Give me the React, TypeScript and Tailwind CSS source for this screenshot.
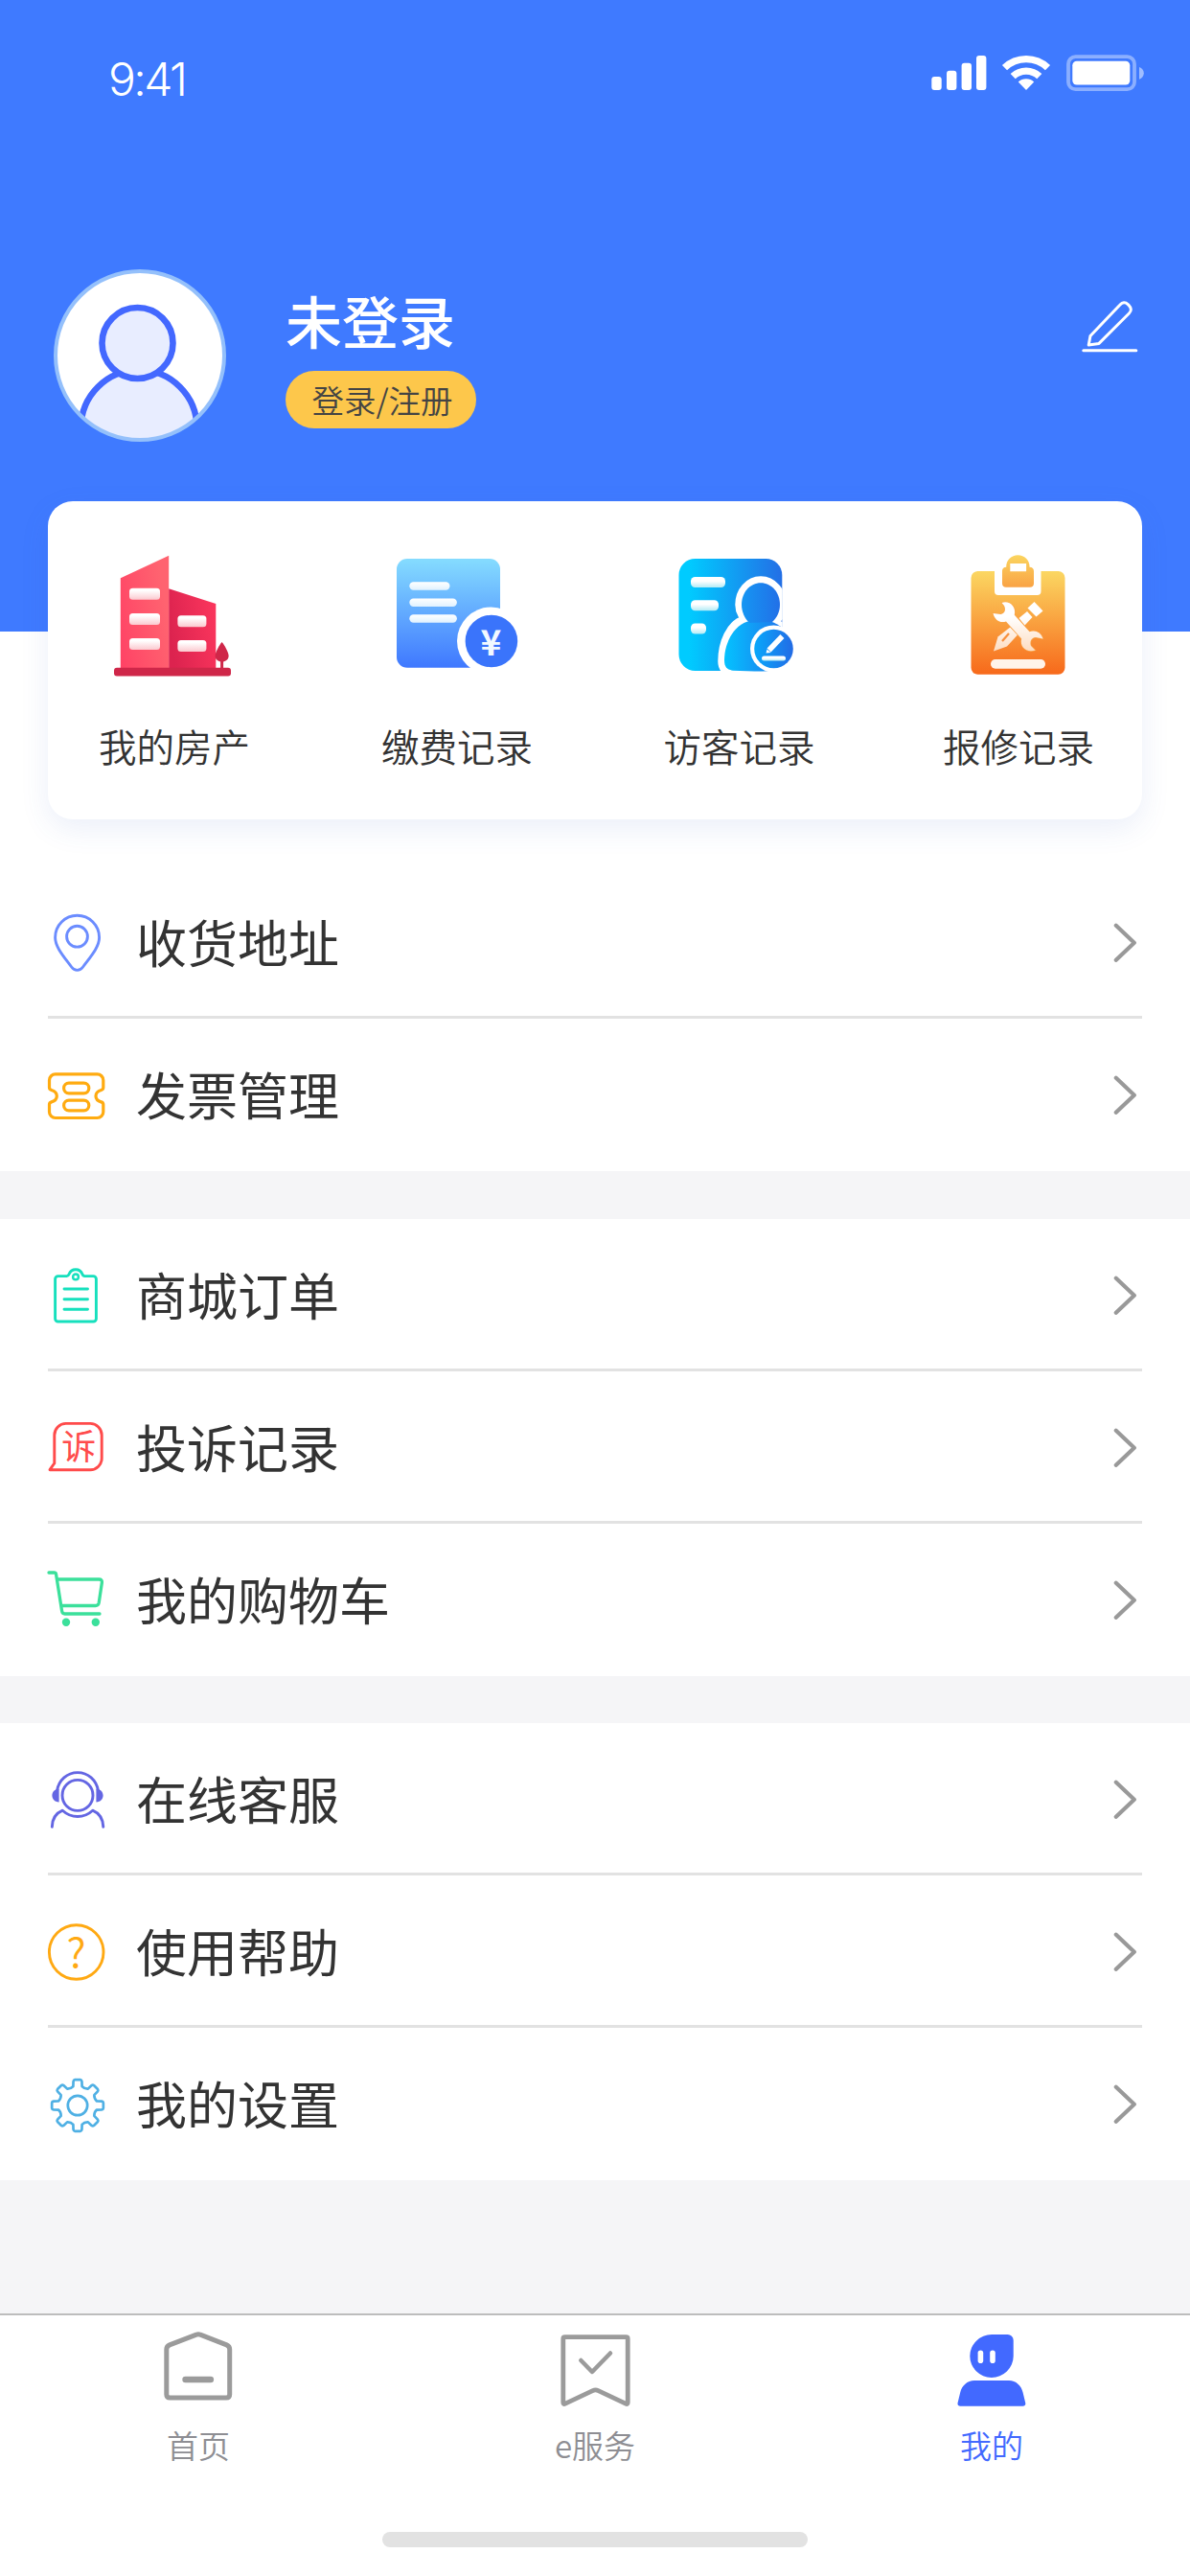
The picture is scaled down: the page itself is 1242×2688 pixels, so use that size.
import type { ReactNode } from "react";

/* ---------- status bar ---------- */

function StatusIcons() {
  return (
    <svg className="h-[44px] w-[228px]" viewBox="968 54 228 44" fill="#fff">
      <rect x="972.3" y="80" width="10.4" height="14" rx="3" />
      <rect x="988" y="73.7" width="10.4" height="20.3" rx="3" />
      <rect x="1003.6" y="65.7" width="10.4" height="28.3" rx="3" />
      <rect x="1019" y="58" width="10.4" height="36" rx="3" />
      <path d="M1071 94l-8.2-8.600a12 12 0 0 1 16.400 0z" />
      <path d="M1057.200 79.600a20 20 0 0 1 27.600 0" fill="none" stroke="#fff" strokeWidth="7.400" />
      <path d="M1048.500 70.600a32.600 32.600 0 0 1 45 0" fill="none" stroke="#fff" strokeWidth="7.400" />
      <rect x="1115" y="59.200" width="69" height="34" rx="7.500" fill="none" stroke="#fff" strokeOpacity=".4" strokeWidth="3.800" />
      <rect x="1119.300" y="63.700" width="60" height="24.800" rx="4.500" />
      <path d="M1189 70c3 .9 4.800 3.400 4.800 6.300s-1.800 5.500-4.800 6.400z" fillOpacity=".5" />
    </svg>
  );
}

/* ---------- profile ---------- */

function Avatar() {
  return (
    <svg className="size-[180px]" viewBox="55.5 281 180 180">
      <clipPath id="avatar-clip">
        <circle cx="145.500" cy="371" r="87.500" />
      </clipPath>
      <circle cx="145.500" cy="371" r="88" fill="#fff" />
      <g clipPath="url(#avatar-clip)" fill="#e8edff" stroke="#4368ff" strokeWidth="6.600">
        <circle cx="144.500" cy="446.500" r="60.500" />
        <circle cx="143" cy="358" r="37" />
      </g>
      <circle cx="145.500" cy="371" r="88" fill="none" stroke="#94c0fb" strokeWidth="4" />
    </svg>
  );
}

function EditIcon() {
  return (
    <svg className="h-[60px] w-[64px]" viewBox="1126 310 64 60" fill="none" stroke="#fff" strokeWidth="3" strokeLinecap="round" strokeLinejoin="round">
      <path d="M1138 350.500l31-32.500c2.500-2.800 5.500-3 8.200-.4l1 1c2.800 2.800 2.900 5.800.2 8.400l-31.400 31.400-10.800 1.600z" />
      <path d="M1130.800 365.700h55" />
    </svg>
  );
}

/* ---------- shortcut icons ---------- */

function HouseIcon() {
  return (
    <svg className="h-[140px] w-[158px]" viewBox="103 570 158 140">
      <defs>
        <linearGradient id="tower-a" x1="0" y1="1" x2="1" y2="0.600">
          <stop offset="0" stopColor="#ff4265" />
          <stop offset="1" stopColor="#ff6370" />
        </linearGradient>
        <linearGradient id="tower-b" x1="0" y1="0.500" x2="1" y2="0.200">
          <stop offset="0" stopColor="#dc234f" />
          <stop offset="1" stopColor="#fb365d" />
        </linearGradient>
        <linearGradient id="pane" x1="0" y1="0" x2="0" y2="1">
          <stop offset="0.200" stopColor="#fff" />
          <stop offset="1" stopColor="#fbc9cf" />
        </linearGradient>
      </defs>
      <path d="M125.800 603.300L176.200 579.700V698H125.800z" fill="url(#tower-a)" />
      <path d="M176.200 614.300L225.300 630V698H176.200z" fill="url(#tower-b)" />
      <g fill="url(#pane)">
        <rect x="135" y="613.700" width="32" height="12" rx="3.500" />
        <rect x="135" y="640" width="32" height="12" rx="3.500" />
        <rect x="135" y="666" width="32" height="12" rx="3.500" />
        <rect x="185.400" y="642.200" width="30" height="12" rx="3.500" />
        <rect x="185.400" y="668" width="30" height="12" rx="3.500" />
      </g>
      <g fill="#cf2749">
        <path d="M231.600 670c2.600 3 7 10.500 7 14.500 0 3.500-3 6-7 6s-7-2.500-7-6c0-4 4.400-11.500 7-14.500z" />
        <rect x="230.100" y="688" width="3" height="10" />
        <rect x="119" y="696.700" width="122" height="8.700" rx="3" />
      </g>
    </svg>
  );
}

function BillIcon() {
  return (
    <svg className="h-[140px] w-[158px]" viewBox="398 570 158 140">
      <defs>
        <linearGradient id="bill" x1="0" y1="0" x2="0" y2="1">
          <stop offset="0" stopColor="#85dcff" />
          <stop offset="1" stopColor="#3f78ff" />
        </linearGradient>
        <linearGradient id="bill-line" x1="0" y1="0" x2="0" y2="1">
          <stop offset="0" stopColor="#fff" />
          <stop offset="1" stopColor="#e0f2ff" />
        </linearGradient>
      </defs>
      <rect x="414" y="583" width="108" height="113.700" rx="11" fill="url(#bill)" />
      <g fill="url(#bill-line)">
        <rect x="427.300" y="607.300" width="42.200" height="8.400" rx="4.200" />
        <rect x="427.300" y="624.500" width="49.600" height="8.400" rx="4.200" />
        <rect x="427.300" y="641.300" width="49.600" height="8.400" rx="4.200" />
      </g>
      <circle cx="512.500" cy="669" r="35.500" fill="#fff" />
      <circle cx="512.900" cy="669" r="27.300" fill="#3a74fb" />
      <text x="512.400" y="684.200" textAnchor="middle" fill="#f2f9ff" className="font-['Noto_Sans_CJK_SC'] text-[37px] font-bold">¥</text>
    </svg>
  );
}

function VisitorIcon() {
  return (
    <svg className="h-[140px] w-[158px]" viewBox="693 570 158 140">
      <defs>
        <linearGradient id="visit" gradientUnits="userSpaceOnUse" x1="708" y1="0" x2="818" y2="0">
          <stop offset="0.100" stopColor="#00cbff" />
          <stop offset="1" stopColor="#246de5" />
        </linearGradient>
        <linearGradient id="visit-head" gradientUnits="userSpaceOnUse" x1="774" y1="0" x2="815" y2="0">
          <stop offset="0" stopColor="#1596f3" />
          <stop offset="1" stopColor="#226fe7" />
        </linearGradient>
        <linearGradient id="visit-body" gradientUnits="userSpaceOnUse" x1="756" y1="0" x2="816" y2="0">
          <stop offset="0" stopColor="#04c3ff" />
          <stop offset="1" stopColor="#1f76ec" />
        </linearGradient>
        <linearGradient id="visit-badge" gradientUnits="userSpaceOnUse" x1="787" y1="0" x2="828" y2="0">
          <stop offset="0" stopColor="#08a8fb" />
          <stop offset="1" stopColor="#236be5" />
        </linearGradient>
        <linearGradient id="visit-line" x1="0" y1="0" x2="0" y2="1">
          <stop offset="0.400" stopColor="#fff" />
          <stop offset="1" stopColor="#b4ebf5" />
        </linearGradient>
        <clipPath id="visit-clip">
          <rect x="700" y="575" width="116.600" height="125.500" />
        </clipPath>
      </defs>
      <rect x="708.500" y="583" width="107.800" height="117" rx="17" fill="url(#visit)" />
      <g fill="url(#visit-line)">
        <rect x="721" y="602" width="36" height="11" rx="4.500" />
        <rect x="721" y="626.200" width="29" height="11" rx="4.500" />
        <rect x="721" y="650.500" width="16" height="11" rx="4.500" />
      </g>
      <g clipPath="url(#visit-clip)">
        <path
          d="M785 649c-7-5-11-11-11-18 0-13 9-23 20-23s20 10 20 23c0 7-3 14-10 19 7 3 11 6 13 9v41h-46c-11 0-15-3-15-10 0-18 8-38 22-41z"
          fill="#fff"
          stroke="#fff"
          strokeWidth="13.500"
          strokeLinejoin="round"
        />
      </g>
      <path d="M783 648h20c6 2 10 4 14 8l-3 44c-17 .8-34 .3-49-.3-6-.7-9-3.700-9-10.700 0-18 10-38 27-41z" fill="url(#visit-body)" />
      <path d="M782 650c-5-5-8-12-8-19 0-13 9-22.700 20-22.700s20 9.700 20 22.700c0 7-3 13.500-8 18z" fill="url(#visit-head)" />
      <circle cx="807.500" cy="677" r="24.500" fill="#fff" />
      <circle cx="807.500" cy="677" r="20.300" fill="url(#visit-badge)" />
      <path d="M804.500 676.500l10-10.500" stroke="#fff" strokeWidth="5.600" strokeLinecap="square" />
      <path d="M799.500 681.500l1-4 4 3.500z" fill="#fff" />
      <rect x="795" y="684.500" width="25" height="5" rx="2.500" fill="url(#visit-line)" />
    </svg>
  );
}

function RepairIcon() {
  return (
    <svg className="h-[140px] w-[158px]" viewBox="984 570 158 140">
      <defs>
        <linearGradient id="board" x1="0" y1="0" x2="0" y2="1">
          <stop offset="0" stopColor="#fbd762" />
          <stop offset="1" stopColor="#f7691b" />
        </linearGradient>
        <linearGradient id="clip" x1="0" y1="0" x2="0" y2="1">
          <stop offset="0" stopColor="#fbd55f" />
          <stop offset="1" stopColor="#f9a244" />
        </linearGradient>
        <linearGradient id="tool" gradientUnits="userSpaceOnUse" x1="0" y1="628" x2="0" y2="680">
          <stop offset="0.300" stopColor="#fff" />
          <stop offset="1" stopColor="#fddcc0" />
        </linearGradient>
      </defs>
      <rect x="1013.500" y="596" width="98" height="107.700" rx="7" fill="url(#board)" />
      <path d="M1038 594h48.500v23a4 4 0 0 1-4 4h-40.500a4 4 0 0 1-4-4z" fill="#fff" />
      <path
        fillRule="evenodd"
        fill="url(#clip)"
        d="M1050.200 591.700c0-7.500 5.400-12.400 12.200-12.400s12.200 4.900 12.200 12.400c2.900 0 4.400 1.700 4.400 4.300v12.700c0 2.600-1.500 4-4 4h-25c-2.500 0-4-1.400-4-4V596c0-2.600 1.300-4.300 4.200-4.300zM1054.300 588v8.200h16.800V588z"
      />
      <g fill="url(#tool)">
        <path d="M1037 679.500l4.500-15 12.800-10 7.700 8-11 12z" />
        <path d="M1063.500 645l8.500-7 5.500 6-8 8.500z" />
        <path d="M1072.500 634.500l7-6.500 9 9.500-7 6z" />
      </g>
      <path d="M1046 669l7-8" stroke="#f8903d" strokeWidth="2.200" />
      <path
        d="M1045.500 629c8-2.800 15.500 4 13.300 12.700l15.700 17.600c5.800-2.300 12 .5 14 7.200l-7.500-1.500c-5 .5-6.500 4.800-5 9l4.500 4.500c-9 3-16.500-3.500-14.300-12L1050 648.500c-6 2-12-1.500-13.500-8.500l8 1c4.500-1 5.500-5 3.500-9z"
        fill="url(#tool)"
        stroke="#f9a448"
        strokeWidth="1.200"
        paintOrder="stroke"
      />
      <rect x="1034" y="688" width="57" height="9.700" rx="4.800" fill="#fff4ea" />
    </svg>
  );
}

/* ---------- menu icons, each in a 64 × 64 box ---------- */

function MenuIcon({ color, width = 2.8, children }: { color: string; width?: number; children: ReactNode }) {
  return (
    <svg className="size-[64px] shrink-0" viewBox="0 0 64 64" fill="none" stroke={color} strokeWidth={width} strokeLinecap="round" strokeLinejoin="round">
      {children}
    </svg>
  );
}

const pin = (
  <MenuIcon color="#6b8cff" width={2.9}>
    <path d="M32.600 62.400c-2.400 0-4.400-1.200-6-3.400C18 47.500 9.600 38 9.600 28.300a23 23 0 0 1 46 0c0 9.700-8.400 19.200-17 30.700-1.600 2.200-3.600 3.400-6 3.400z" />
    <circle cx="32.500" cy="27.200" r="10.900" />
  </MenuIcon>
);

const ticket = (
  <MenuIcon color="#ffab10" width={3.2}>
    <path d="M9.800 11.900h43.700a6.300 6.300 0 0 1 6.300 6.300v7.600c0 1.500-.8 2.300-2.200 2.700-3 .9-5.600 3.200-5.600 6.200s2.600 5.300 5.600 6.200c1.400.4 2.200 1.200 2.200 2.700v7.600a6.300 6.300 0 0 1-6.300 6.300H9.800a6.300 6.300 0 0 1-6.300-6.300v-7.600c0-1.500.8-2.300 2.200-2.700 3-.9 5.600-3.200 5.600-6.200s-2.600-5.300-5.600-6.200c-1.400-.4-2.200-1.200-2.200-2.700v-7.600a6.300 6.300 0 0 1 6.300-6.300z" />
    <rect x="18.600" y="21.200" width="26.200" height="10.600" rx="5.300" />
    <rect x="18.600" y="39.200" width="26.200" height="10.600" rx="5.300" />
  </MenuIcon>
);

const clipboard = (
  <MenuIcon color="#16e0bd" width={2.9}>
    <path d="M12.600 13.600h9c1.300 0 2-.7 2.500-2 1.200-3.300 3.800-4.800 6.900-4.800s5.700 1.500 6.900 4.800c.5 1.300 1.200 2 2.500 2h9a3 3 0 0 1 3 3V58a3 3 0 0 1-3 3H12.600a3 3 0 0 1-3-3V16.600a3 3 0 0 1 3-3z" />
    <circle cx="31" cy="14.400" r="2.900" strokeWidth="2.400" />
    <path d="M19 27h24.500M19 37.700h24.500M19 48.300h24.500" />
  </MenuIcon>
);

const complaint = (
  <MenuIcon color="#ff4b4b" width={2.9}>
    <path d="M8.800 50V20.400a12 12 0 0 1 12-12h25.400a12 12 0 0 1 12 12v24.300a12 12 0 0 1-12 12H4l4.300-6.200z" />
    <text x="34.200" y="45.600" textAnchor="middle" fill="#ff4b4b" stroke="none" className="font-['Noto_Sans_CJK_SC'] text-[36px]">诉</text>
  </MenuIcon>
);

const cart = (
  <MenuIcon color="#3be09b" width={3.3}>
    <path d="M3 5h5.600c1 0 1.700.5 1.900 1.500L16.600 45c.3 2 1.200 3 3 3H56" />
    <path d="M12.400 12h43c2.200 0 3.300 1.200 3 3.200l-3.200 21.300c-.4 2-1.500 3-3.500 3H17" />
    <circle cx="21" cy="56.700" r="4.200" fill="#3be09b" stroke="none" />
    <circle cx="51.800" cy="56.700" r="4.200" fill="#3be09b" stroke="none" />
  </MenuIcon>
);

const headset = (
  <MenuIcon color="#6466e3" width={2.9}>
    <circle cx="33" cy="29.400" r="16" />
    <path d="M11.500 24.500C13.500 13.500 22 5.600 33 5.600s19.500 7.900 21.500 18.900" />
    <path d="M13.600 22.800v13.600C9 36.400 6.400 33 6.400 29.500s2.600-6.700 7.200-6.700zM52.400 22.800v13.600c4.600 0 7.200-3.400 7.200-6.900s-2.600-6.700-7.200-6.700z" fill="#6466e3" stroke="none" />
    <path d="M6.300 62.400C6.500 54 10.500 48 17.300 45.200 22 49.500 27 51.500 33 51.500s11-2 15.700-6.300C55.500 48 59.500 54 59.800 62.400" />
  </MenuIcon>
);

const help = (
  <MenuIcon color="#ffa912" width={2.9}>
    <circle cx="31.700" cy="34" r="28.300" />
    <text x="31.500" y="50" textAnchor="middle" fill="#ffa912" stroke="none" className="font-['Noto_Sans_CJK_SC'] text-[43px] font-[350]">?</text>
  </MenuIcon>
);

const teeth = [0, 45, 90, 135, 180, 225, 270, 315];

function polar(radius: number, degrees: number) {
  const a = (degrees * Math.PI) / 180;
  return `${(33 + radius * Math.sin(a)).toFixed(2)} ${(35 - radius * Math.cos(a)).toFixed(2)}`;
}

const gearPath =
  teeth
    .map((t, i) => {
      const start = i === 0 ? "M" : "L";
      return `${start}${polar(20.5, t - 13)}L${polar(25.5, t - 10)}Q${polar(27, t - 9)} ${polar(27, t - 6)}L${polar(27, t + 6)}Q${polar(27, t + 9)} ${polar(25.5, t + 10)}L${polar(20.5, t + 13)}Q${polar(18.6, t + 22.5)} ${polar(20.5, t + 32)}`;
    })
    .join("") + "Z";

const gear = (
  <MenuIcon color="#4fb0e4" width={2.7}>
    <path d={gearPath} />
    <circle cx="33" cy="35" r="10.200" />
  </MenuIcon>
);

/* ---------- list ---------- */

type Item = { label: string; icon: ReactNode };

function Chevron() {
  return (
    <svg className="ml-auto h-[44px] w-[32px]" viewBox="0 0 32 44" fill="none" stroke="#999" strokeWidth="4.200" strokeLinecap="round" strokeLinejoin="round">
      <path d="M4.800 5.800l19 18-19 18" />
    </svg>
  );
}

function MenuGroup({ items }: { items: Item[] }) {
  return (
    <ul className="bg-white px-[50px]">
      {items.map(({ label, icon }) => (
        <li key={label} className="flex h-[159px] items-center border-b-3 border-[#e2e2e2] last:border-transparent">
          <span className="-ml-[2px]">{icon}</span>
          <span className="ml-[30px] text-[53px] leading-[80px] text-[#333]">{label}</span>
          <Chevron />
        </li>
      ))}
    </ul>
  );
}

const shortcuts: Item[] = [
  { label: "我的房产", icon: <HouseIcon /> },
  { label: "缴费记录", icon: <BillIcon /> },
  { label: "访客记录", icon: <VisitorIcon /> },
  { label: "报修记录", icon: <RepairIcon /> },
];

/* ---------- tab bar ---------- */

const homeTab = (
  <svg className="h-[88px] w-[80px]" viewBox="168 2428 80 88" fill="none" stroke="#9b9b9b" strokeWidth="5" strokeLinejoin="round" strokeLinecap="round">
    <path d="M206 2436.200q2-1 4 0l27.500 10.700q3.200 1.400 3.200 4.600V2498.500q0 3.600-3.600 3.600H178.400q-3.600 0-3.600-3.600V2451.500q0-3.200 3.200-4.600z" />
    <path d="M194.600 2483h26.200" strokeWidth="6.600" />
  </svg>
);

const serviceTab = (
  <svg className="h-[88px] w-[80px]" viewBox="582 2428 80 88" fill="none" stroke="#9b9b9b" strokeWidth="4.800" strokeLinejoin="round" strokeLinecap="round">
    <path d="M591 2438.700h63.400q1.800 0 1.800 1.800V2507q0 2.300-2.200 1.200l-28.600-13.600q-2.900-1.400-5.800 0l-28.600 13.600q-2.200 1.100-2.200-1.200V2440.500q0-1.800 1.800-1.800z" />
    <path d="M607.300 2463l11.700 12 19-19.500" strokeWidth="4.500" />
  </svg>
);

const mineTab = (
  <svg className="h-[88px] w-[80px]" viewBox="996 2428 80 88" fill="#4269ff">
    <path d="M1036 2436.100h16.700a6 6 0 0 1 6 6v16.700a22.700 22.400 0 1 1-22.700-22.700z" />
    <path d="M1018 2484h36c7.500 0 13 5.500 14.600 12.500l2.600 10.700c.5 2-.5 3.500-2.700 3.500h-65.200c-2.200 0-3.200-1.500-2.700-3.500l2.600-10.700c1.600-7 7.300-12.500 14.800-12.500z" />
    <rect x="1021.600" y="2452.500" width="5.600" height="13.600" rx="2.800" fill="#fff" />
    <rect x="1034.200" y="2452.500" width="5.600" height="13.600" rx="2.800" fill="#fff" />
  </svg>
);

function Tab({ label, icon, active = false }: Item & { active?: boolean }) {
  return (
    <div className={active ? "flex flex-col items-center text-[#4269ff]" : "flex flex-col items-center text-[#8e8e93]"}>
      {icon}
      <span className="mt-[10px] text-[33px] leading-[50px] font-[350]">{label}</span>
    </div>
  );
}

/* ---------- page ---------- */

export default function App() {
  return (
    <div className="flex h-[2688px] w-[1242px] flex-col overflow-hidden bg-[#f5f5f7] font-['Noto_Sans_CJK_SC','Noto_Sans',sans-serif]">
      <header className="h-[659px] bg-[#3f7aff] text-white">
        <div className="flex items-start justify-between pt-[54px] pr-[46px] pl-[113px]">
          <span className="font-['Inter'] text-[48px] leading-[58px] font-[350] tracking-[-2.6px]">9:41</span>
          <StatusIcons />
        </div>
        <div className="mt-[169px] flex items-start pr-[52px] pl-[55.5px]">
          <Avatar />
          <div className="ml-[62.5px] flex flex-col items-start">
            <h1 className="mt-[11px] text-[59px] leading-[84px] font-medium">未登录</h1>
            <button className="mt-[11px] h-[60px] w-[199px] rounded-full bg-[#fdc74b] pl-[3px] text-[33.5px] leading-[60px] font-[350] text-[#444]">登录/注册</button>
          </div>
          <div className="mt-[29px] ml-auto">
            <EditIcon />
          </div>
        </div>
      </header>

      <main>
        <div className="flex flex-col bg-white px-[50px] pb-[49px]">
          <section className="relative -mt-[136px] grid h-[332px] grid-cols-[295px_294.5px_291.5px_158px] rounded-[26px] bg-white pt-[47px] pl-[53px] shadow-[0_10px_30px_rgba(60,100,200,0.1)]">
            {shortcuts.map(({ label, icon }) => (
              <div key={label} className="flex w-[158px] flex-col items-center">
                {icon}
                <span className="mt-[38px] text-[39.5px] leading-[60px] font-[350] whitespace-nowrap text-[#333]">{label}</span>
              </div>
            ))}
          </section>
        </div>
        <div className="flex flex-col">
          <MenuGroup items={[{ label: "收货地址", icon: pin }, { label: "发票管理", icon: ticket }]} />
          <div className="h-[50px]" />
          <MenuGroup items={[{ label: "商城订单", icon: clipboard }, { label: "投诉记录", icon: complaint }, { label: "我的购物车", icon: cart }]} />
          <div className="h-[49px]" />
          <MenuGroup items={[{ label: "在线客服", icon: headset }, { label: "使用帮助", icon: help }, { label: "我的设置", icon: gear }]} />
        </div>
      </main>

      <footer className="mt-auto flex h-[274px] flex-col items-center border-t-2 border-[#bdbdbd] bg-white">
        <nav className="grid w-full grid-cols-3 pt-[12px]">
          <Tab label="首页" icon={homeTab} />
          <Tab label="e服务" icon={serviceTab} />
          <Tab label="我的" icon={mineTab} active />
        </nav>
        <div className="mt-auto mb-[30px] h-[16px] w-[444px] rounded-full bg-[#e2e2e2]" />
      </footer>
    </div>
  );
}
